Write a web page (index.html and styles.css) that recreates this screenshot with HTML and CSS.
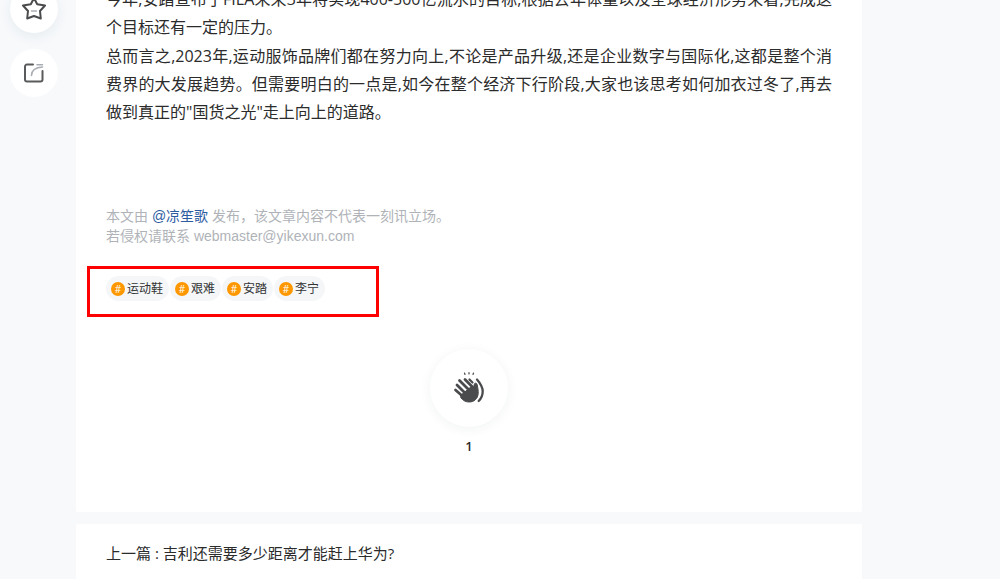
FILE: index.html
```
<!DOCTYPE html>
<html lang="zh-CN">
<head>
  <meta charset="UTF-8" />
  <meta name="viewport" content="width=device-width, initial-scale=1.0"/>
  <title>一刻讯</title>
  <link rel="stylesheet" href="styles.css">
</head>

<body>

  <div class="page">
    <!-- Left tools -->
    <aside class="tools">
      <button class="tool" aria-label="收藏">
        <svg width="24" height="24" viewBox="0 0 24 24" fill="none" stroke="#4a4b4d" stroke-width="2" stroke-linejoin="round" stroke-linecap="round">
          <path d="M12 1l3.200 6.200 7.800 1.300-5 5.500.8 7.500-6.800-2.500-6.800 2.500.8-7.500-5-5.500 7.800-1.300z"/>
          <path d="M9.500 14h5" stroke="#a9adb3" stroke-width="1.500"/>
        </svg>
      </button>
      <button class="tool" aria-label="分享">
        <svg width="24" height="24" viewBox="0 0 24 24" fill="none" stroke="#5a5b5d" stroke-width="2" stroke-linejoin="round" stroke-linecap="round">
          <path d="M11 3.500H5a2 2 0 0 0-2 2V18.500a2 2 0 0 0 2 2H18.500a2 2 0 0 0 2-2V10"/>
          <path d="M9.500 14.500C9.500 9.500 12 6.500 20.500 6M15 3.800h5.500" stroke="#a9adb3" stroke-width="1.500"/>
        </svg>
      </button>
    </aside>

    <!-- Article -->
    <main class="content">
      <article class="card article">
        <div class="text">
          <p>今年,安踏宣布了FILA未来3年将实现400-500亿流水的目标,根据去年体量以及全球经济形势来看,完成这个目标还有一定的压力。</p>
          <p>总而言之,2023年,运动服饰品牌们都在努力向上,不论是产品升级,还是企业数字与国际化,这都是整个消费界的大发展趋势。但需要明白的一点是,如今在整个经济下行阶段,大家也该思考如何加衣过冬了,再去做到真正的"国货之光"走上向上的道路。</p>
        </div>

        <div class="notice">
          <p>本文由 <a href="#">@凉笙歌</a> 发布，该文章内容不代表一刻讯立场。</p>
          <p>若侵权请联系 webmaster@yikexun.com</p>
        </div>

        <div class="tags">
          <a class="tag" href="#"><span class="hash">#</span>运动鞋</a>
          <a class="tag" href="#"><span class="hash">#</span>艰难</a>
          <a class="tag" href="#"><span class="hash">#</span>安踏</a>
          <a class="tag" href="#"><span class="hash">#</span>李宁</a>
        </div>

        <div class="clap">
          <button class="clap-btn" aria-label="鼓掌">
            <svg width="40" height="40" viewBox="0 0 40 40" fill="none" stroke="#4a4b4d" stroke-linecap="round" stroke-linejoin="round">
              <path d="M15.500 5l.5 1.500M20 4.500v1.500M24.500 5l-.5 1.500" stroke-width="1.200"/>
              <path d="M16 11.500l8 8M10.500 12.500l10 10M8 17l9 9M6.500 22l8 7" stroke-width="2.800"/>
              <path d="M20.500 11.500l3 3" stroke-width="2.200"/>
              <path d="M12 27l5-4 6-5 1.500 3 .7-4.500c.3-2 2.800-1.700 3 .2.500 3 1.300 6 1 9-.5 5-4 8.300-9 8.300-4 0-5.700-1.500-8.200-4z" fill="#4a4b4d" stroke-width="1"/>
              <path d="M26.500 12c3 3 5 6.500 5.200 11 .1 4-.7 7-2.700 10" stroke="#fff" stroke-width="1.200"/>
              <path d="M28 11.500c3.500 4 5.800 7.500 5.700 12 0 4-1.500 7-4 9.500" stroke-width="2.300"/>
            </svg>
          </button>
          <span class="count">1</span>
        </div>
      </article>

      <!-- Prev article -->
      <nav class="card prev">
        <a href="#">上一篇 : 吉利还需要多少距离才能赶上华为?</a>
      </nav>
    </main>
  </div>

</body>
</html>
```
FILE: styles.css
```
body {
  margin: 0;
  height: 100vh;
  overflow: hidden;
  background-color: #f7f9fb;
  color: #2b2b2b;
  font-family: "Open Sans", "Noto Sans CJK SC", sans-serif;
}
p {
  margin: 0;
}
a {
  color: inherit;
  text-decoration: none;
}
button {
  padding: 0;
  border: none;
  background-color: #fff;
  border-radius: 50%;
  display: flex;
  align-items: center;
  justify-content: center;
  cursor: pointer;
}
.page {
  display: grid;
  grid-template-columns: 76px 1fr 138px;
  margin-top: -15px;
}
.tools {
  display: flex;
  flex-direction: column;
  gap: 16px;
  padding-left: 10px;
}
.tool {
  width: 48px;
  height: 48px;
}
.tool:first-child {
  box-shadow: 0 4px 12px rgba(60, 90, 120, 0.08);
}
.content {
  display: flex;
  flex-direction: column;
  gap: 12px;
}
.card {
  background-color: #fff;
  border-radius: 2px;
  padding: 0 30px;
}
.article {
  padding-bottom: 56px;
}
.text {
  font-size: 16px;
  line-height: 28px;
  text-align: justify;
}
.text p + p {
  margin-top: 1px;
}
.notice {
  margin-top: 80px;
  color: #afb3b8;
  font-family: "Liberation Sans", "Noto Sans CJK SC", sans-serif;
  font-size: 14px;
  line-height: 20px;
}
.notice a {
  color: #2c5c9f;
}
.tags {
  display: flex;
  gap: 1px;
  width: 270px;
  margin: 20px 0 0 -19px;
  padding: 7px 0 13px 16px;
  border: 3px solid #fe0000;
}
.tag {
  display: flex;
  align-items: center;
  gap: 2px;
  height: 25px;
  padding: 0 6px 0 5px;
  border-radius: 13px;
  background-color: #f4f6f8;
  color: #333;
  font-size: 12px;
  line-height: 24px;
}
.hash {
  width: 14px;
  height: 14px;
  border-radius: 50%;
  background-color: #ff9800;
  color: #fff;
  font-size: 10px;
  line-height: 14px;
  text-align: center;
}
.clap {
  display: flex;
  flex-direction: column;
  align-items: center;
  gap: 9px;
  margin-top: 32px;
}
.clap-btn {
  width: 78px;
  height: 78px;
  box-shadow: 0 2px 12px rgba(40, 50, 80, 0.06);
}
.count {
  font-size: 13px;
  font-weight: 600;
  line-height: 20px;
}
.prev {
  font-size: 15px;
  line-height: 24px;
  padding: 17px 30px;
}
```
